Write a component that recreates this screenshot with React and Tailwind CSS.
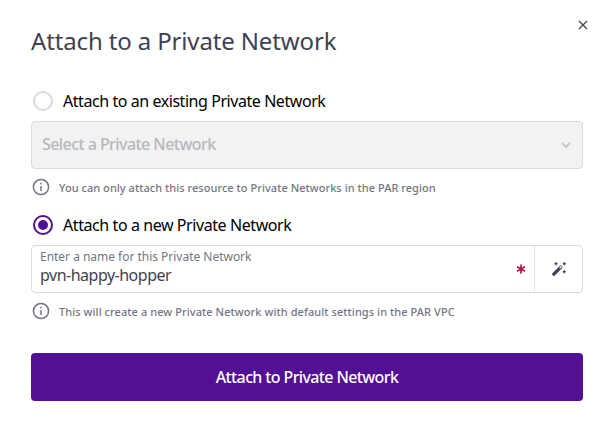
import React from "react";

function InfoIcon() {
  return (
    <svg className="ml-px h-[18px] w-[18px] shrink-0" viewBox="0 0 18 18" fill="none">
      <circle cx="9" cy="9" r="7.6" stroke="#727683" strokeWidth="1.5" />
      <path d="M9 8v5" stroke="#727683" strokeWidth="1.5" />
      <circle cx="9" cy="5.6" r="0.95" fill="#727683" />
    </svg>
  );
}

function Hint({ children, className }) {
  return (
    <div className="flex h-[18px] items-center gap-[9px]">
      <InfoIcon />
      <p className={`whitespace-nowrap pt-[2px] text-[11px] font-medium leading-[18px] text-[#727683] ${className}`}>{children}</p>
    </div>
  );
}

function Radio({ checked, children, className }) {
  return (
    <label className="flex h-5 items-center gap-[10px] pl-[2px]">
      <span
        className={`flex h-5 w-5 shrink-0 items-center justify-center rounded-full border-2 ${
          checked ? "border-[#521094]" : "border-[#d9dadd]"
        }`}
      >
        {checked && <span className="h-[10px] w-[10px] rounded-full bg-[#521094]" />}
      </span>
      <span className={`whitespace-nowrap text-[16px] leading-5 text-black ${className}`}>{children}</span>
    </label>
  );
}

export default function App() {
  return (
    <div className="h-[429px] w-[610px] overflow-hidden bg-white pl-[31px] pr-[27px] font-['Noto_Sans','Open_Sans',sans-serif]">
      <header className="flex h-[91px] justify-between">
        <h1 className="mt-[25px] h-8 whitespace-nowrap text-[24px] leading-8 tracking-[-0.14px] text-[#3f4250]">
          Attach to a Private Network
        </h1>
        <button className="-mr-[5px] mt-5 h-[10px] w-[10px]" aria-label="Close">
          <svg viewBox="0 0 10 10" className="h-[10px] w-[10px]">
            <path d="M1 1l8 8M9 1L1 9" stroke="#3f4250" strokeWidth="1.3" />
          </svg>
        </button>
      </header>

      <Radio className="tracking-[-0.44px]">Attach to an existing Private Network</Radio>
      <div className="mb-[9px] mt-[10px] flex h-12 items-center justify-between rounded-[4px] border border-[#d9dadd] bg-[#f2f2f2] pl-[10px] pr-[11px]">
        <span className="whitespace-nowrap pb-[2px] text-[16px] font-medium leading-5 tracking-[-0.56px] text-[#b5b7bd]">Select a Private Network</span>
        <svg viewBox="0 0 10 6" className="h-[6px] w-[10px]" fill="none">
          <path d="M.7.7L5 4.9 9.3.7" stroke="#c8c9cc" strokeWidth="2" />
        </svg>
      </div>
      <Hint className="tracking-[0.04px]">You can only attach this resource to Private Networks in the PAR region</Hint>

      <div className="mt-[19px]">
        <Radio checked className="tracking-[-0.42px]">Attach to a new Private Network</Radio>
      </div>
      <div className="mb-[9px] mt-[10px] flex h-12 rounded-[4px] border border-[#d9dadd]">
        <div className="flex flex-1 flex-col pl-2 pt-[3px]">
          <span className="whitespace-nowrap text-[12px] leading-4 tracking-[-0.02px] text-[#727683]">Enter a name for this Private Network</span>
          <span className="whitespace-nowrap text-[16px] leading-5 tracking-[-0.5px] text-[#3f4250]">pvn-happy-hopper</span>
        </div>
        <svg viewBox="0 0 10 10" className="mr-[8px] mt-[18px] h-[10px] w-[10px]">
          <path d="M5 .6v8.8M1 2.8l8 4.4M9 2.8L1 7.2" stroke="#b3144d" strokeWidth="1.7" />
        </svg>
        <div className="flex w-12 items-center justify-center border-l border-[#e4e5e7]">
          <svg viewBox="0 0 16 16" className="h-4 w-4" fill="none">
            <path d="M2.8 13.2L9.9 6.1" stroke="#3f4250" strokeWidth="3.3" strokeLinecap="round" />
            <path d="M9.2 6.8l1-1" stroke="#fff" strokeWidth="1.4" strokeLinecap="round" />
            <path d="M5 .8l.8 1.3 1.2.7-1.2.7L5 4.7l-.8-1.2L3 2.8l1.2-.7zM13.3.8l.8 1.3 1.2.7-1.2.7-.8 1.2-.8-1.2-1.2-.7 1.2-.7zM13.3 8.8l.8 1.3 1.2.7-1.2.7-.8 1.2-.8-1.2-1.2-.7 1.2-.7z" fill="#3f4250" />
          </svg>
        </div>
      </div>
      <Hint className="tracking-[0.07px]">This will create a new Private Network with default settings in the PAR VPC</Hint>

      <button className="mt-[33px] flex h-12 w-full items-center justify-center rounded-[4px] bg-[#521094] text-[16px] font-medium leading-5 tracking-[-0.62px] text-white">
        Attach to Private Network
      </button>
    </div>
  );
}
